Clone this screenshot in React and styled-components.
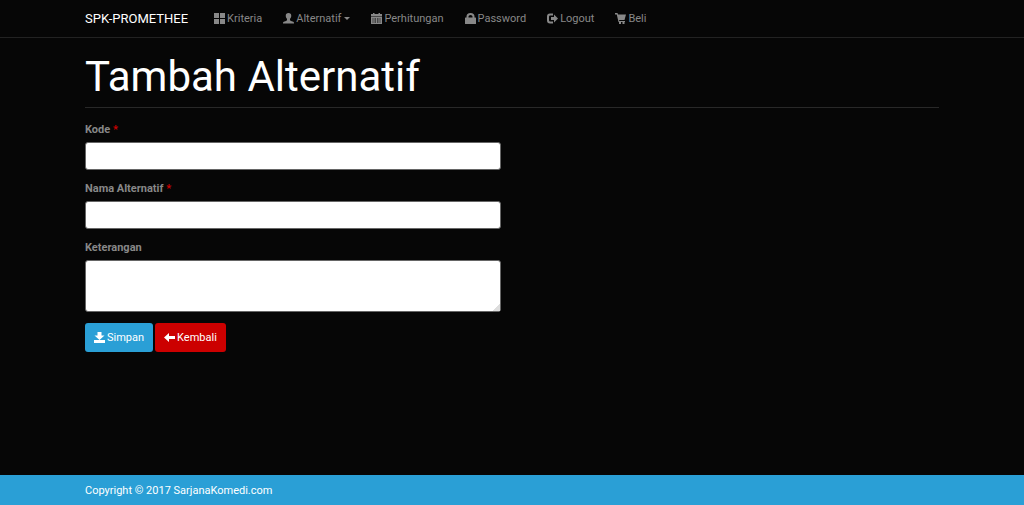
import React, { useState } from "react";
import styled, { createGlobalStyle } from "styled-components";

const GlobalStyle = createGlobalStyle`
  * {
    box-sizing: border-box;
  }

  body {
    margin: 0;
    background-color: #060606;
    color: #888;
    font-family: Roboto, "Liberation Sans", sans-serif;
    font-size: 11px;
    line-height: 16px;
  }
`;

const Page = styled.div`
  display: flex;
  flex-direction: column;
  min-height: 100vh;
`;

const Container = styled.div`
  width: 100%;
  max-width: 878px;
  margin: 0 auto;
  padding: 0 12px;
`;

const Navbar = styled.nav`
  border-bottom: 1px solid #222;
`;

const NavInner = styled(Container)`
  display: flex;
  align-items: center;
  height: 37px;
`;

const Brand = styled.a`
  margin-right: 16px;
  color: #fff;
  font-size: 13px;
  text-decoration: none;
`;

const NavList = styled.ul`
  display: flex;
  gap: 1px;
  margin: 0;
  padding: 0;
  list-style: none;
`;

const NavLink = styled.a`
  display: flex;
  align-items: center;
  gap: 2px;
  padding: 10px;
  color: #888;
  text-decoration: none;

  &:hover {
    color: #fff;
  }
`;

const Caret = styled.span`
  margin-left: 1px;
  border-top: 3px solid;
  border-right: 3px solid transparent;
  border-left: 3px solid transparent;
`;

const Icon = styled.svg`
  flex: none;
  width: 11px;
  height: 11px;
  fill: currentColor;
`;

const Main = styled.main`
  flex: 1;
`;

const PageHeader = styled.header`
  margin-bottom: 14px;
  padding: 16px 0 7px;
  border-bottom: 1px solid #282828;
`;

const Title = styled.h1`
  margin: 0;
  color: #fff;
  font-size: 42px;
  font-weight: 400;
  line-height: 46px;
`;

const EntryForm = styled.form`
  width: 49%;
  max-width: 416px;
`;

const FormGroup = styled.div`
  margin-bottom: 11px;
`;

const Label = styled.label`
  display: block;
  margin-bottom: 4px;
  font-weight: 700;
`;

const Required = styled.span`
  color: #c00;
`;

const Input = styled.input`
  display: block;
  width: 100%;
  height: 28px;
  padding: 6px 9px;
  border: 1px solid #666;
  border-radius: 3px;
  background-color: #fff;
  color: #888;
  font: inherit;
`;

const TextArea = styled(Input)`
  height: 52px;
  resize: vertical;

  &::-webkit-resizer {
    background: linear-gradient(135deg, #fff 75%, #ddd 75%);
  }
`;

const Actions = styled.div`
  display: flex;
  gap: 2px;
`;

const Button = styled.button`
  display: flex;
  align-items: center;
  gap: 2px;
  height: 29px;
  padding: 0 9px;
  border: 0;
  border-radius: 3px;
  background-color: ${({ $danger }) => ($danger ? "#c00" : "#2a9fd6")};
  color: #fff;
  font: inherit;
  text-decoration: none;
  cursor: pointer;
`;

const Footer = styled.footer`
  padding: 8px 0 6px;
  background-color: #2a9fd6;
  color: #fff;
`;

const icons = {
  grid: <path d="M0 0h10v10H0zM12 0h10v10H12zM0 12h10v10H0zM12 12h10v10H12z" />,
  user: (
    <path d="M11 0c3.6 0 5.500 2.200 5.500 5.400 0 2.800-1 5-2.500 6.300v2.100c0 1 .8 1.500 2 2l4.500 1.700c1.100.5 1.500 1.300 1.500 2.500V21H0v-1c0-1.200.4-2 1.500-2.500L6 15.800c1.200-.5 2-1 2-2v-2.100C6.500 10.400 5.500 8.200 5.500 5.400 5.500 2.200 7.400 0 11 0z" />
  ),
  calendar: (
    <path
      fillRule="evenodd"
      d="M4 0h3v2h8V0h3v2h4v5H0V2h4zM0 8h22v14H0zM3 11v2h2v-2zM7 11v2h3v-2zM12 11v2h3v-2zM17 11v2h2v-2zM3 15v2h2v-2zM7 15v2h3v-2zM12 15v2h3v-2zM17 15v2h2v-2zM3 19v1h2v-1zM7 19v1h3v-1zM12 19v1h3v-1zM17 19v1h2v-1z"
    />
  ),
  lock: (
    <path
      fillRule="evenodd"
      d="M3 9V7a8 7 0 0 1 16 0v2h2q1 0 1 1v11q0 1-1 1H1q-1 0-1-1V10q0-1 1-1zM7 9h8V7a4 3 0 0 0-8 0z"
    />
  ),
  logout: (
    <path d="M12 1v4H6.500Q4 5 4 7.500v7Q4 17 6.500 17H12v4H6q-6 0-6-6V7q0-6 6-6zM14 3l8 8-8 8v-5H8V8h6z" />
  ),
  cart: (
    <path d="M0 0h5l1 3h16l-3 11H8l.7 2H20v2H7L3.500 3H0zM8 18h4v4H8zM15 18h4v4h-4z" />
  ),
  save: <path d="M7 0h8v7h6L11 16 1 7h6zM0 16h22v6H0z" />,
  back: <path d="M0 11l10-9v6h12v6H10v6z" />,
};

const Glyph = ({ name }) => (
  <Icon viewBox="0 0 22 22" aria-hidden="true">
    {icons[name]}
  </Icon>
);

const navItems = [
  { label: "Kriteria", icon: "grid" },
  { label: "Alternatif", icon: "user", dropdown: true },
  { label: "Perhitungan", icon: "calendar" },
  { label: "Password", icon: "lock" },
  { label: "Logout", icon: "logout" },
  { label: "Beli", icon: "cart" },
];

const App = () => {
  const [values, setValues] = useState({ kode: "", nama: "", keterangan: "" });

  const handleChange = (event) => {
    const { name, value } = event.target;
    setValues((prev) => ({ ...prev, [name]: value }));
  };

  const handleSubmit = (event) => {
    event.preventDefault();
  };

  return (
    <Page>
      <GlobalStyle />
      <Navbar>
        <NavInner>
          <Brand href="#">SPK-PROMETHEE</Brand>
          <NavList>
            {navItems.map((item) => (
              <li key={item.label}>
                <NavLink href="#">
                  <Glyph name={item.icon} />
                  {item.label}
                  {item.dropdown && <Caret />}
                </NavLink>
              </li>
            ))}
          </NavList>
        </NavInner>
      </Navbar>

      <Main>
        <Container>
          <PageHeader>
            <Title>Tambah Alternatif</Title>
          </PageHeader>
          <EntryForm onSubmit={handleSubmit}>
            <FormGroup>
              <Label htmlFor="kode">
                Kode <Required>*</Required>
              </Label>
              <Input
                id="kode"
                name="kode"
                type="text"
                value={values.kode}
                onChange={handleChange}
              />
            </FormGroup>
            <FormGroup>
              <Label htmlFor="nama">
                Nama Alternatif <Required>*</Required>
              </Label>
              <Input
                id="nama"
                name="nama"
                type="text"
                value={values.nama}
                onChange={handleChange}
              />
            </FormGroup>
            <FormGroup>
              <Label htmlFor="keterangan">Keterangan</Label>
              <TextArea
                as="textarea"
                id="keterangan"
                name="keterangan"
                value={values.keterangan}
                onChange={handleChange}
              />
            </FormGroup>
            <Actions>
              <Button type="submit">
                <Glyph name="save" />
                Simpan
              </Button>
              <Button as="a" href="#" $danger>
                <Glyph name="back" />
                Kembali
              </Button>
            </Actions>
          </EntryForm>
        </Container>
      </Main>

      <Footer>
        <Container>Copyright © 2017 SarjanaKomedi.com</Container>
      </Footer>
    </Page>
  );
};

export default App;
